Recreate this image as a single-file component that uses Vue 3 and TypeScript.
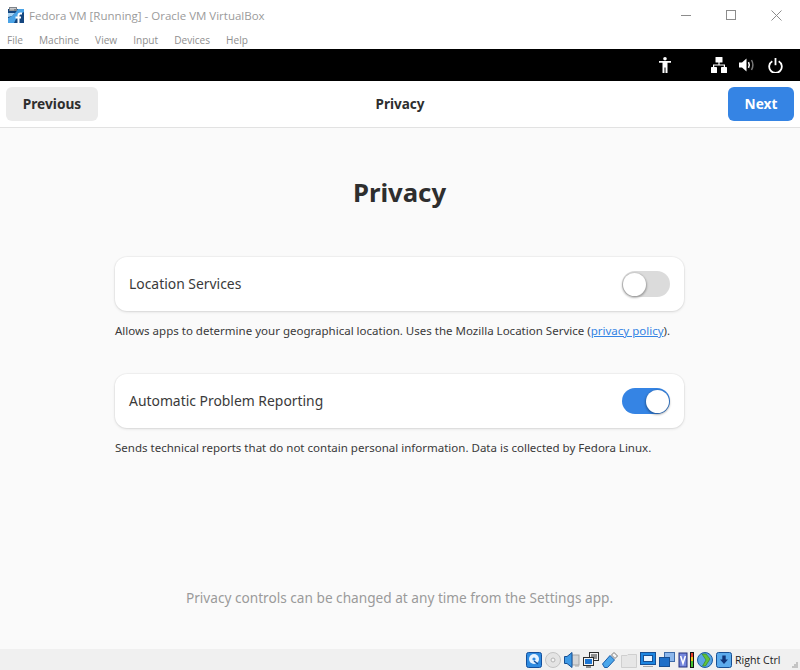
<script setup lang="ts">
const menus: string[] = ['File', 'Machine', 'View', 'Input', 'Devices', 'Help']
</script>

<template>
  <div class="win">
    <header class="titlebar">
      <svg class="logo" width="16" height="16" viewBox="0 0 16 16">
        <rect x="0" y="2" width="16" height="14" fill="#14467f" />
        <path d="M0 11Q6 9 10 2H16V5Q9 8 6 16H0Z" fill="#4aa3e6" />
        <path d="M0 6H7L4 9L0 10Z" fill="#a8d4f4" />
        <rect x="1" y="0" width="8" height="4" fill="#7d8288" />
        <path d="M2 1.500H8M2 2.800H6" stroke="#e8e8e8" stroke-width=".7" />
        <path d="M14 6.500H12.500Q10.500 6.500 10.500 8.500V16M7.500 10.500H13" fill="none" stroke="#fff" stroke-width="2" />
      </svg>
      <span class="title">Fedora VM [Running] - Oracle VM VirtualBox</span>
      <div class="winctl">
        <svg width="10" height="10" viewBox="0 0 10 10"><path d="M0 5.500H10" stroke="#8c8c8c" /></svg>
        <svg width="10" height="10" viewBox="0 0 10 10"><rect x=".5" y=".5" width="9" height="9" fill="none" stroke="#8c8c8c" /></svg>
        <svg width="11" height="11" viewBox="0 0 11 11"><path d="M.5 .5L10.500 10.500M10.500 .5L.5 10.500" stroke="#8c8c8c" /></svg>
      </div>
    </header>
    <nav class="menubar">
      <span v-for="m in menus" :key="m">{{ m }}</span>
    </nav>
    <div class="topbar">
      <svg class="a11y" width="12" height="16" viewBox="0 0 12 16" fill="#fff">
        <circle cx="6" cy="1.800" r="1.800" />
        <path d="M0 4H12V5.800H8.500V16H6.500V10.500H5.500V16H3.500V5.800H0Z" />
      </svg>
      <svg class="net" width="16" height="16" viewBox="0 0 16 16" fill="#fff">
        <rect x="4.500" y="0" width="7" height="5.500" rx=".6" />
        <path d="M7.400 5H8.600V7.400H14V11H12.800V8.600H3.200V11H2V7.400H7.400Z" />
        <rect x="0" y="10" width="6" height="6" rx=".6" />
        <rect x="10" y="10" width="6" height="6" rx=".6" />
      </svg>
      <svg class="vol" width="16" height="14" viewBox="0 0 16 14" fill="none">
        <path d="M0 4.500H3L7.500 .5V13.500L3 9.500H0Z" fill="#fff" />
        <path d="M9.500 4.200Q11 7 9.500 9.800" stroke="#fff" stroke-width="1.500" />
        <path d="M12.500 2Q15.300 7 12.500 12" stroke="#777" stroke-width="1.500" />
      </svg>
      <svg class="pow" width="15" height="15" viewBox="0 0 15 15" fill="none" stroke="#fff" stroke-width="1.800">
        <path d="M4.300 3.200A6.300 6.300 0 1 0 10.700 3.200" />
        <path d="M7.500 0V7.200" />
      </svg>
    </div>
    <div class="headerbar">
      <button class="btn prev">Previous</button>
      <span class="hb-title">Privacy</span>
      <button class="btn next">Next</button>
    </div>
    <main class="page">
      <h1>Privacy</h1>
      <section class="group first">
        <div class="card">
          <span class="label">Location Services</span>
          <span class="switch"><span class="knob"></span></span>
        </div>
        <p class="note">Allows apps to determine your geographical location. Uses the Mozilla Location Service (<a class="link">privacy policy</a>).</p>
      </section>
      <section class="group">
        <div class="card">
          <span class="label">Automatic Problem Reporting</span>
          <span class="switch on"><span class="knob"></span></span>
        </div>
        <p class="note">Sends technical reports that do not contain personal information. Data is collected by Fedora Linux.</p>
      </section>
      <p class="foot">Privacy controls can be changed at any time from the Settings app.</p>
    </main>
    <footer class="statusbar">
      <!-- hard disk -->
      <svg width="16" height="16" viewBox="0 0 16 16"><rect x=".5" y=".5" width="15" height="15" rx="2" fill="#2f8be0" stroke="#134f9c" /><circle cx="8" cy="7" r="5" fill="#e6f3ff" /><circle cx="8" cy="7" r="1.600" fill="#2f8be0" /><path d="M8 9L12 12" stroke="#134f9c" stroke-width="1.500" /></svg>
      <!-- optical -->
      <svg width="16" height="16" viewBox="0 0 16 16"><circle cx="8" cy="8" r="7.500" fill="#e4e4e4" stroke="#c4c4c4" /><circle cx="8" cy="8" r="2" fill="#f4f4f4" stroke="#b4b4b4" /></svg>
      <!-- audio -->
      <svg width="16" height="16" viewBox="0 0 16 16"><rect x="8" y="3" width="7" height="10" fill="#d6d6d6" stroke="#a6a6a6" /><path d="M11 14H15" stroke="#a6a6a6" /><path d="M.5 4.500H3L8 .5V15.500L3 11.500H.5Z" fill="#3f9ae6" stroke="#174f93" /></svg>
      <!-- network -->
      <svg width="16" height="16" viewBox="0 0 16 16"><rect x="6.500" y=".5" width="9" height="8" fill="#f2f2f2" stroke="#2d2d2d" /><rect x="8" y="2" width="6" height="5" fill="#8f8f8f" /><rect x=".5" y="5.500" width="10" height="8" fill="#f2f2f2" stroke="#2d2d2d" /><rect x="2" y="7" width="7" height="5" fill="#1e76d2" /><path d="M3 15H8" stroke="#2d2d2d" /></svg>
      <!-- usb -->
      <svg width="16" height="16" viewBox="0 0 16 16"><path d="M.5 12L8 3.500L12.500 8L5.500 15.500H2.500Z" fill="#4aa6ea" stroke="#1a5ca8" /><path d="M9.500 3L12 .5L15.500 4L13 6.500Z" fill="#f4f4f4" stroke="#777" /></svg>
      <!-- shared folder -->
      <svg width="16" height="16" viewBox="0 0 16 16"><path d="M.5 3.500H6L7 2.500H15.500V15.500H.5Z" fill="#e6e6e6" stroke="#cfcfcf" /></svg>
      <!-- display -->
      <svg width="16" height="16" viewBox="0 0 16 16"><rect x=".5" y=".5" width="15" height="12" fill="#1e86e0" stroke="#174f93" /><rect x="3.500" y="3.500" width="9" height="6" fill="#eaf5ff" stroke="#174f93" /><path d="M3 14.500H13" stroke="#a8a8a8" /></svg>
      <!-- recording -->
      <svg width="16" height="16" viewBox="0 0 16 16"><rect x="5.500" y=".5" width="10" height="9" fill="#8db8ec" stroke="#3d6ba8" /><rect x=".5" y="5.500" width="10" height="9" fill="#1e6fc8" stroke="#174f93" /></svg>
      <span class="vt">
        <svg width="10" height="16" viewBox="0 0 10 16"><rect x="1" y="1" width="8" height="14" fill="#7486dc" stroke="#23307c" /><path d="M2.600 4L5 11.500L7.400 4" fill="none" stroke="#fff" stroke-width="1.500" /></svg>
        <svg width="4" height="16" viewBox="0 0 4 16"><rect width="4" height="16" fill="#111" /><rect x="1" y="1" width="2" height="4" fill="#e63c2a" /><rect x="1" y="5" width="2" height="4" fill="#f2c51d" /><rect x="1" y="9" width="2" height="6" fill="#45c12e" /></svg>
      </span>
      <!-- guest additions -->
      <svg width="16" height="16" viewBox="0 0 16 16"><circle cx="8" cy="8" r="7.500" fill="#5aa6e4" stroke="#1b5ba3" /><path d="M5 2H9L13 7L8.500 14H5.500L9 8Z" fill="#62c23c" stroke="#2e7d1f" stroke-width=".6" /></svg>
      <!-- capture -->
      <svg width="16" height="16" viewBox="0 0 16 16"><rect x=".5" y=".5" width="15" height="15" rx="2" fill="#5cabec" stroke="#174f93" /><path d="M6.300 3.500H9.700V7.500H12L8 12L4 7.500H6.300Z" fill="#10367a" /></svg>
      <span class="rc">Right Ctrl</span>
      <svg class="grip" width="6" height="6" viewBox="0 0 6 6" fill="#c4c4c4"><rect x="4" y="0" width="2" height="2" /><rect x="2" y="2" width="2" height="2" /><rect x="4" y="2" width="2" height="2" /><rect x="0" y="4" width="2" height="2" /><rect x="2" y="4" width="2" height="2" /><rect x="4" y="4" width="2" height="2" /></svg>
    </footer>
  </div>
</template>

<style>
html, body { margin: 0; padding: 0; }
</style>

<style scoped>
.win { width: 800px; height: 670px; display: flex; flex-direction: column; background: #fff; overflow: hidden; font-family: "Noto Sans", sans-serif; }
.titlebar { height: 29px; flex: none; display: flex; align-items: center; padding-left: 8px; box-sizing: border-box; padding-top: 1px; }
.logo { margin-right: 5px; }
.title { font: 11.500px "Open Sans", sans-serif; color: #9b9b9b; }
.winctl { margin-left: auto; display: flex; align-items: center; gap: 35px; padding-right: 18px; }
.menubar { height: 20px; flex: none; display: flex; gap: 16px; padding-left: 7px; align-items: center; font: 10.100px "Open Sans", sans-serif; color: #8f8f8f; box-sizing: border-box; padding-top: 2px; }
.topbar { height: 32px; flex: none; background: #000; display: flex; align-items: center; }
.a11y { margin-left: 659px; }
.net { margin-left: 40px; }
.vol { margin-left: 12px; }
.pow { margin-left: 13px; }
.headerbar { flex: none; display: grid; grid-template-columns: 1fr auto 1fr; align-items: center; padding: 6px; background: #fff; border-bottom: 1px solid #e2e2e2; }
.btn { height: 34px; border: none; border-radius: 6px; font: 700 13.700px "Noto Sans", sans-serif; padding: 0 0 2px; }
.prev { width: 92px; background: #ebebeb; color: #2e2e2e; justify-self: start; }
.next { width: 66px; background: #3584e4; color: #fff; justify-self: end; }
.hb-title { font-size: 13.500px; font-weight: 700; color: #2e2e2e; }
.page { flex: 1; background: #fafafa; display: flex; flex-direction: column; align-items: center; padding-right: 1px; }
h1 { margin: 46px 0 0; height: 38px; line-height: 38px; font-size: 25.700px; font-weight: 700; color: #2e2e2e; }
.group { width: 569px; }
.first { margin-top: 45px; }
.group + .group { margin-top: 34px; }
.card { height: 54px; background: #fff; border-radius: 12px; box-shadow: 0 0 0 1px rgba(0,0,0,.03), 0 1px 3px rgba(0,0,0,.12); display: flex; align-items: center; justify-content: space-between; padding: 0 14px; box-sizing: border-box; font-size: 13.900px; color: #3a3a3a; }
.label { margin-bottom: 2px; }
.switch { width: 48px; height: 26px; border-radius: 13px; background: #dbdbdb; display: flex; align-items: center; padding: 1px; box-sizing: border-box; }
.knob { width: 23px; height: 23px; border-radius: 50%; background: #fff; box-shadow: 0 1px 2px 1px rgba(0,0,0,.28); }
.on { background: #3584e4; justify-content: flex-end; }
.note { margin: 11px 0 0; font-size: 11.520px; line-height: 18px; color: #3a3a3a; white-space: nowrap; }
.link { color: #3584e4; text-decoration: underline; }
.foot { margin: auto 0 41px; font-size: 13.650px; line-height: 20px; color: #9a9a9a; }
.statusbar { height: 21px; flex: none; background: #f0f0f0; display: flex; align-items: center; padding-left: 526px; gap: 3px; box-sizing: border-box; position: relative; }
.vt { display: flex; align-items: center; gap: 2px; }
.rc { font: 10.600px "Open Sans", sans-serif; color: #222; }
.grip { position: absolute; right: 2px; bottom: 2px; }
</style>
